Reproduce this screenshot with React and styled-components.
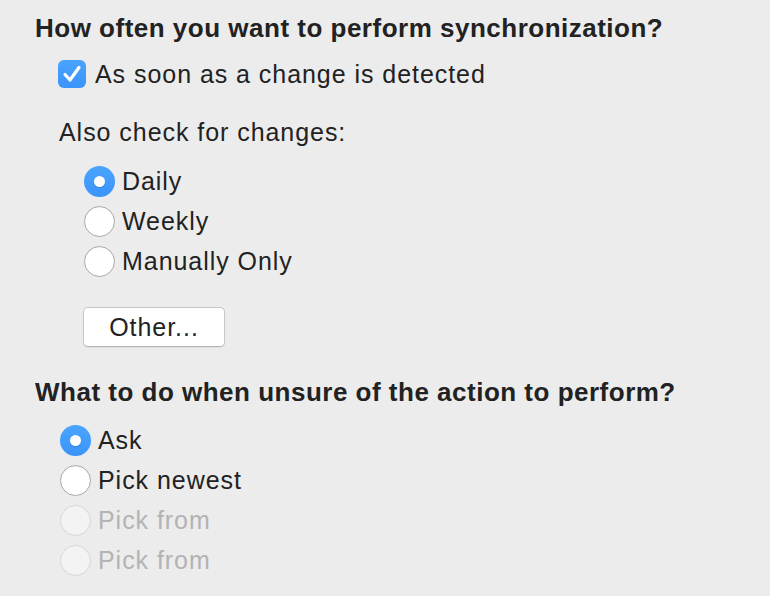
import React, { useState } from 'react'
import styled, { createGlobalStyle } from 'styled-components'

const GlobalStyle = createGlobalStyle`
    html, body {
        margin: 0;
        padding: 0;
        background: #ececec;
    }
    body {
        font-family: "Liberation Sans", Arial, sans-serif;
        color: #222222;
        -webkit-font-smoothing: antialiased;
    }
`

const Pane = styled.div`
    width: 770px;
    height: 596px;
    overflow: hidden;
    box-sizing: border-box;
    padding: 13px 0 0 35px;
    display: flex;
    flex-direction: column;
`

const Heading = styled.div`
    font-size: 26px;
    font-weight: bold;
    letter-spacing: 0.5px;
    line-height: 30px;
    height: 30px;
    white-space: nowrap;
    margin-top: ${p => p.$top || 0}px;
`

const Label = styled.div`
    font-size: 25px;
    letter-spacing: 0.95px;
    line-height: 30px;
    height: 30px;
    margin-left: ${p => p.$indent || 0}px;
    margin-top: ${p => p.$top || 0}px;
    white-space: nowrap;
`

const Group = styled.div`
    display: flex;
    flex-direction: column;
    margin-left: ${p => p.$indent || 0}px;
    margin-top: ${p => p.$top || 0}px;
`

const Row = styled.label`
    display: flex;
    align-items: center;
    height: 40px;
    gap: ${p => p.$gap || 7}px;
    font-size: 25px;
    letter-spacing: 0.95px;
    color: ${p => (p.$disabled ? '#b3b3b3' : '#222222')};
    cursor: ${p => (p.$disabled ? 'default' : 'pointer')};
    white-space: nowrap;
`

const CheckBox = styled.span`
    width: 28px;
    height: 28px;
    border-radius: 6px;
    box-sizing: border-box;
    display: flex;
    align-items: center;
    justify-content: center;
    background: ${p => (p.$on ? 'linear-gradient(#4aa3fd, #3a95fb)' : '#ffffff')};
    border: ${p => (p.$on ? 'none' : '1px solid #b5b5b5')};
`

const Radio = styled.span`
    width: 31px;
    height: 31px;
    border-radius: 50%;
    box-sizing: border-box;
    flex-shrink: 0;
    display: flex;
    align-items: center;
    justify-content: center;
    background: ${p => (p.$on ? 'linear-gradient(#4ba4fd, #3a94fb)' : p.$disabled ? '#f3f3f3' : '#ffffff')};
    border: ${p => (p.$on ? 'none' : p.$disabled ? '1px solid #d6d6d6' : '1px solid #a9a9a9')};
    box-shadow: ${p => (p.$on || p.$disabled ? 'none' : 'inset 0 1px 1px rgba(0,0,0,0.05)')};
`

const Dot = styled.span`
    width: 11px;
    height: 11px;
    border-radius: 50%;
    background: #ffffff;
    box-shadow: 0 1px 1px rgba(0, 0, 0, 0.15);
`

const Button = styled.button`
    width: 142px;
    height: 40px;
    margin-top: ${p => p.$top || 0}px;
    margin-left: ${p => p.$indent || 0}px;
    background: #ffffff;
    border: 1px solid #c6c6c6;
    border-bottom-color: #b4b4b4;
    border-radius: 5px;
    box-shadow: 0 1px 1px rgba(0, 0, 0, 0.06);
    font-family: "Liberation Sans", Arial, sans-serif;
    font-size: 25px;
    letter-spacing: 0.95px;
    color: #222222;
    padding: 0;
`

const Check = () => (
    <svg width="20" height="18" viewBox="0 0 20 18">
        <path d="M3 9.5 L8 15 L17 2.5" fill="none" stroke="#ffffff" strokeWidth="3.2" strokeLinecap="round" strokeLinejoin="round" />
    </svg>
)

const RadioRow = ({ label, on, disabled, onPick }) => (
    <Row $disabled={disabled} onClick={() => !disabled && onPick(label)}>
        <Radio $on={on} $disabled={disabled}>{on && <Dot />}</Radio>
        {label}
    </Row>
)

const App = () => {
    const [instant, setInstant] = useState(true)
    const [freq, setFreq] = useState('Daily')
    const [unsure, setUnsure] = useState('Ask')

    return (
        <>
            <GlobalStyle />
            <Pane>
                <Heading>How often you want to perform synchronization?</Heading>
                <Group $indent={23} $top={11}>
                    <Row $gap={9} onClick={() => setInstant(!instant)}>
                        <CheckBox $on={instant}>{instant && <Check />}</CheckBox>
                        As soon as a change is detected
                    </Row>
                </Group>
                <Label $indent={24} $top={23}>Also check for changes:</Label>
                <Group $indent={49} $top={14}>
                    {['Daily', 'Weekly', 'Manually Only'].map(f => (
                        <RadioRow key={f} label={f} on={freq === f} onPick={setFreq} />
                    ))}
                </Group>
                <Button $indent={48} $top={26}>Other...</Button>
                <Heading $top={30}>What to do when unsure of the action to perform?</Heading>
                <Group $indent={25} $top={13}>
                    <RadioRow label="Ask" on={unsure === 'Ask'} onPick={setUnsure} />
                    <RadioRow label="Pick newest" on={unsure === 'Pick newest'} onPick={setUnsure} />
                    <RadioRow label="Pick from" disabled />
                    <RadioRow label="Pick from" disabled />
                </Group>
            </Pane>
        </>
    )
}

export default App
